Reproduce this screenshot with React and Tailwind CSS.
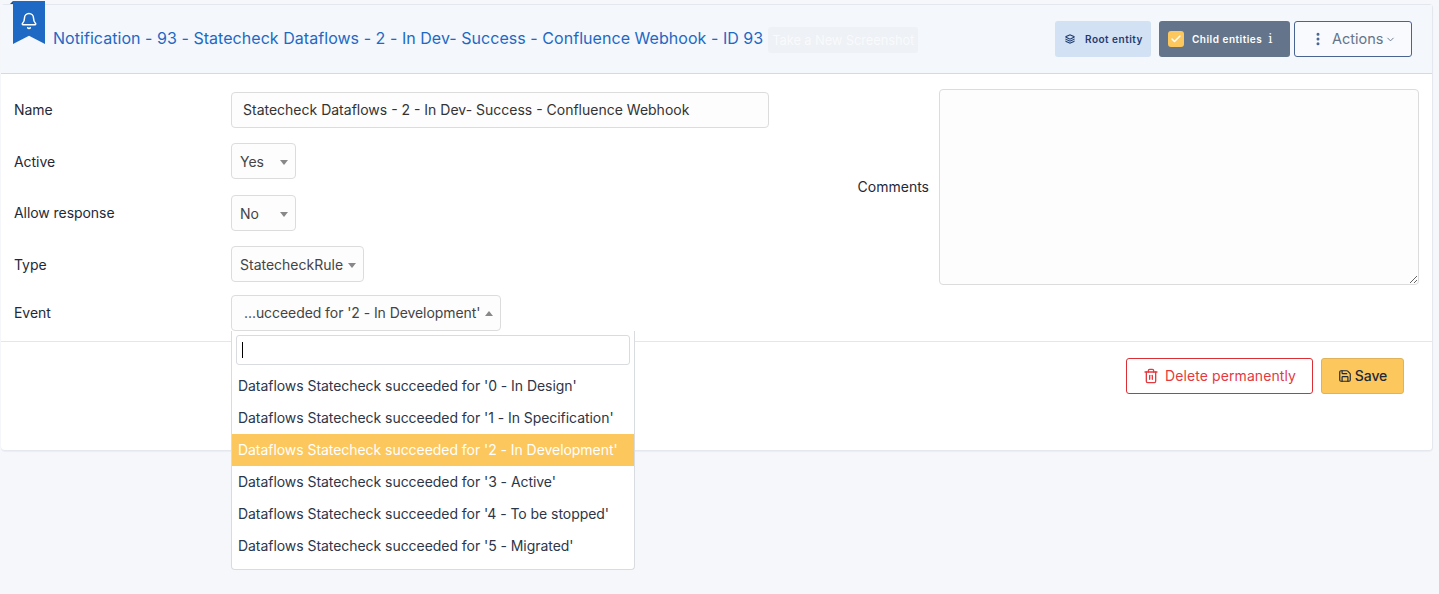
import { Check, ChevronDown, EllipsisVertical, Layers, Save, Trash2 } from "lucide-react";

const options = [
  "Dataflows Statecheck succeeded for '0 - In Design'",
  "Dataflows Statecheck succeeded for '1 - In Specification'",
  "Dataflows Statecheck succeeded for '2 - In Development'",
  "Dataflows Statecheck succeeded for '3 - Active'",
  "Dataflows Statecheck succeeded for '4 - To be stopped'",
  "Dataflows Statecheck succeeded for '5 - Migrated'",
];

function Caret({ up }) {
  return (
    <span
      className={
        up
          ? "w-0 h-0 border-x-[4px] border-x-transparent border-b-[5px] border-b-[#888888]"
          : "w-0 h-0 border-x-[4px] border-x-transparent border-t-[5px] border-t-[#888888]"
      }
    />
  );
}

function Select({ value, width, up, className }) {
  return (
    <div
      className={`h-9 flex items-center justify-between pl-2 pr-[7px] bg-[#fdfdfd] border border-[#dcdcdc] rounded-[4px] text-[#444444] ${width} ${className || ""}`}
    >
      <span>{value}</span>
      <Caret up={up} />
    </div>
  );
}

function Row({ label, className, labelClass, children }) {
  return (
    <div className={`flex items-center ${className || ""}`}>
      <div className={`w-[217px] shrink-0 text-[#1f2937] tracking-[-0.06px] ${labelClass || ""}`}>{label}</div>
      {children}
    </div>
  );
}

export default function App() {
  return (
    <div className="min-h-[594px] bg-[#f5f7fb] pt-1 pl-px pr-1.5 font-['Inter',sans-serif] text-sm">
      <div className="relative bg-white border border-[#e4e8ee] border-l-0 rounded-[4px] h-[447px] shadow-[0_1px_1px_rgba(0,0,0,0.04)]">
        {/* header */}
        <div className="relative h-[69px] bg-[#f4f7fc] border-b border-[#cfdbe8] flex items-center pl-[52px] pr-[20px]">
          <span className="absolute left-[9px] top-[-4px] w-[3px] h-[3px] bg-[#174f94] [clip-path:polygon(100%_0,100%_100%,0_100%)]" />
          <div className="absolute left-3 top-[-4px] w-8 h-[43px] bg-[#1d69c4] [clip-path:polygon(0_0,100%_0,100%_100%,50%_81%,0_100%)] flex justify-center pt-[11px]">
            <svg width="18" height="18" viewBox="0 0 24 24" fill="none" stroke="white" strokeWidth="2" strokeLinecap="round" strokeLinejoin="round">
              <path d="M10.268 21a2 2 0 0 0 3.464 0" />
              <path d="M3.262 15.326A1 1 0 0 0 4 17h16a1 1 0 0 0 .74-1.673C19.41 13.956 18 12.499 18 8A6 6 0 0 0 6 8c0 4.499-1.411 5.956-2.738 7.326" />
            </svg>
          </div>
          <h1 className="mb-[2px] text-base text-[#1d69c4] whitespace-nowrap tracking-[0.045px]">
            Notification - 93 - Statecheck Dataflows - 2 - In Dev- Success - Confluence Webhook - ID 93
          </h1>
          <div className="ml-[5px] mt-[2px] w-[150px] h-[26px] bg-[#eef1f5] rounded-[3px] text-[#f9fafc] flex items-center justify-center text-[13px] tracking-[-0.15px] whitespace-nowrap">
            Take a New Screenshot
          </div>
          <div className="ml-auto flex items-center">
            <div className="w-[96px] h-9 bg-[#d2e1f4] rounded-[3px] flex items-center pl-[10px] text-[10px] font-semibold text-[#1e3a6e] tracking-[0.5px]">
              <Layers size={10} strokeWidth={2.5} />
              <span className="ml-[10px] whitespace-nowrap">Root entity</span>
            </div>
            <div className="ml-2 w-[131px] h-9 bg-[#64748b] rounded-[3px] flex items-center pl-[9px] text-[10px] font-semibold text-white tracking-[0.5px]">
              <span className="w-4 h-4 bg-[#fcc75c] rounded-[3px] flex items-center justify-center">
                <Check size={12} strokeWidth={3} className="text-white" />
              </span>
              <span className="ml-2 whitespace-nowrap">Child entities</span>
              <span className="ml-[6px] text-[13px] font-normal font-['DejaVu_Serif',serif]">i</span>
            </div>
            <div className="ml-1 w-[118px] h-9 bg-white/40 border border-[#4a6491] rounded-[3px] flex items-center pl-[15px] text-[14.5px] text-[#64748b]">
              <EllipsisVertical size={16} strokeWidth={2.5} className="text-[#4a6491]" />
              <span className="ml-[6px]">Actions</span>
              <ChevronDown size={11} className="ml-[2px]" />
            </div>
          </div>
        </div>

        {/* form */}
        <div className="h-[268px] flex justify-between border-b border-[#e6e6e6] pl-[13px] pr-[13px]">
          <div className="w-[755px] pt-[18px]">
            <Row label="Name">
              <div className="w-[538px] h-9 flex items-center px-[11px] bg-[#fdfdfd] border border-[#dcdcdc] rounded-[4px] text-[#333333]">
                Statecheck Dataflows - 2 - In Dev- Success - Confluence Webhook
              </div>
            </Row>
            <Row label="Active" labelClass="mt-[2px]" className="mt-[15px]">
              <Select value="Yes" width="w-[65px]" className="pt-[2px]" />
            </Row>
            <Row label="Allow response" className="mt-4">
              <Select value="No" width="w-[65px]" className="pt-[2px]" />
            </Row>
            <Row label="Type" labelClass="mt-[2px]" className="mt-[15px]">
              <Select value="StatecheckRule" width="w-[133px]" className="pt-[2px]" />
            </Row>
            <Row label="Event" className="mt-[13px]">
              <Select value="...ucceeded for '2 - In Development'" width="w-[270px] tracking-[-0.07px]" up className="pl-3" />
            </Row>
          </div>
          <div className="flex items-center pt-[15px] pb-[56px]">
            <div className="text-[#1f2937] whitespace-nowrap">Comments</div>
            <textarea className="ml-[10px] w-[480px] h-[196px] bg-[#fdfdfd] border border-[#dcdcdc] rounded-[4px]" />
          </div>
        </div>

        {/* footer */}
        <div className="flex justify-end pt-4 pr-[28px]">
          <button className="w-[187px] h-9 flex items-center justify-center gap-[6px] bg-white border border-[#dc2f35] rounded-[3px] text-[#e5393f] tracking-[0.1px]">
            <Trash2 size={16} />
            Delete permanently
          </button>
          <button className="ml-[8px] w-[83px] h-9 flex items-center justify-center gap-[3px] bg-[#fcc75c] border border-[#e0b35a] rounded-[3px] text-[#1f2937] font-medium tracking-[-0.05px]">
            <Save size={14} />
            Save
          </button>
        </div>

        {/* open dropdown */}
        <div className="absolute left-[230px] top-[326px] w-[404px] h-[239px] bg-white border border-[#d8dbe0] border-t-0 rounded-b-[4px] text-[#2d3648] tracking-[-0.05px]">
          <div className="mx-1 mt-1 h-[30px] bg-white border border-[#d8dbe0] rounded-[3px] flex items-center pl-[5px]">
            <span className="w-px h-4 bg-black" />
          </div>
          <ul className="mt-[5px]">
            {options.map((o, i) => (
              <li
                key={o}
                className={i === 2 ? "h-8 flex items-center pl-[6px] bg-[#fcc75c] text-white" : "h-8 flex items-center pl-[6px]"}
              >
                {o}
              </li>
            ))}
          </ul>
        </div>
      </div>
    </div>
  );
}
